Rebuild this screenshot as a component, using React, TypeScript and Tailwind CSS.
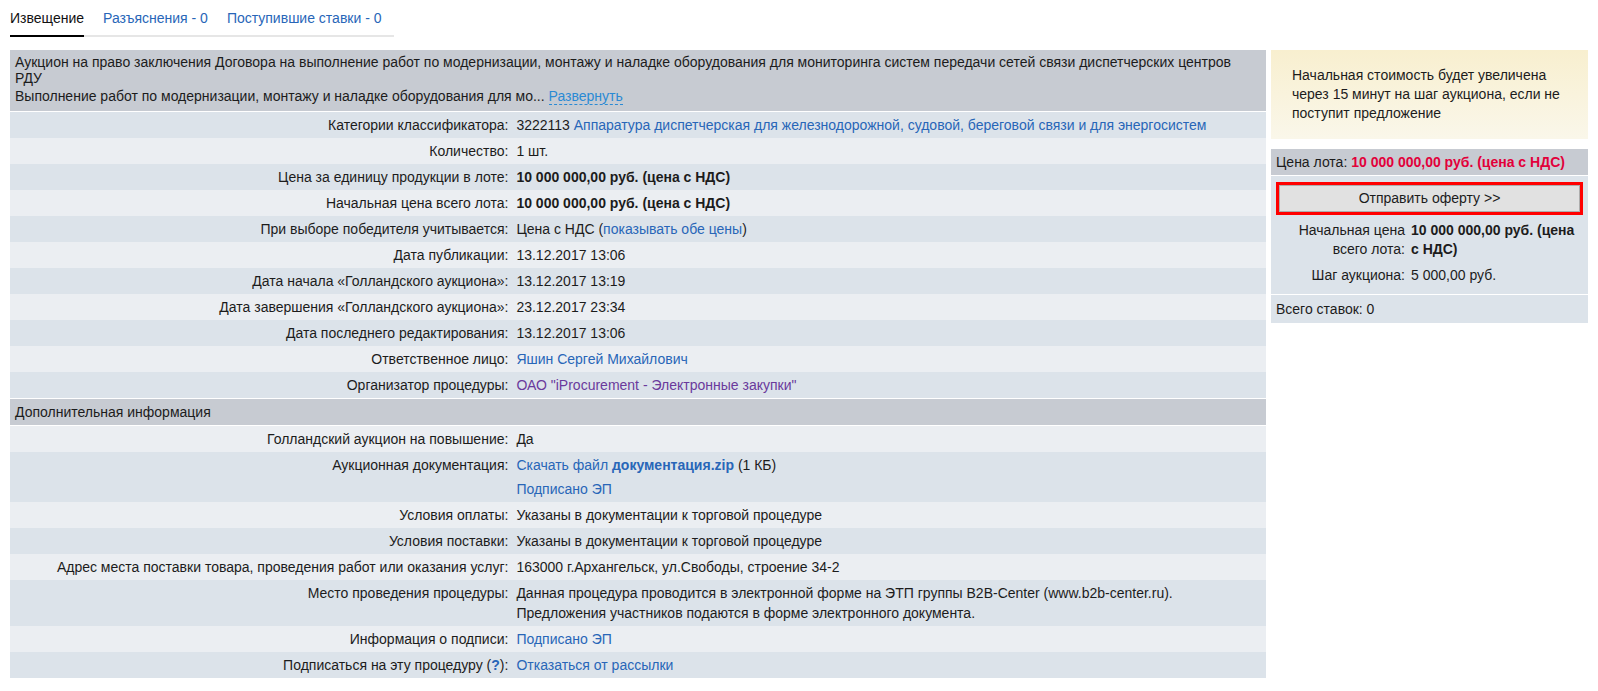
import type { ReactNode } from "react";

const LINK = "text-[#2866b8]";

type Row = { label: ReactNode; value: ReactNode };

const mainRows: Row[] = [
    {
        label: "Категории классификатора:",
        value: (
            <>
                3222113 <a className={LINK}>Аппаратура диспетчерская для железнодорожной, судовой, береговой связи и для энергосистем</a>
            </>
        ),
    },
    { label: "Количество:", value: "1 шт." },
    { label: "Цена за единицу продукции в лоте:", value: <b>10 000 000,00 руб. (цена с НДС)</b> },
    { label: "Начальная цена всего лота:", value: <b>10 000 000,00 руб. (цена с НДС)</b> },
    {
        label: "При выборе победителя учитывается:",
        value: (
            <>
                Цена с НДС (<a className={LINK}>показывать обе цены</a>)
            </>
        ),
    },
    { label: "Дата публикации:", value: "13.12.2017 13:06" },
    { label: "Дата начала «Голландского аукциона»:", value: "13.12.2017 13:19" },
    { label: "Дата завершения «Голландского аукциона»:", value: "23.12.2017 23:34" },
    { label: "Дата последнего редактирования:", value: "13.12.2017 13:06" },
    { label: "Ответственное лицо:", value: <a className={LINK}>Яшин Сергей Михайлович</a> },
    { label: "Организатор процедуры:", value: <a className="text-[#6a3a9c]">ОАО "iProcurement - Электронные закупки"</a> },
];

const extraRows: Row[] = [
    { label: "Голландский аукцион на повышение:", value: "Да" },
    {
        label: "Аукционная документация:",
        value: (
            <>
                <div>
                    <a className={LINK}>
                        Скачать файл <b>документация.zip</b>
                    </a>{" "}
                    (1 КБ)
                </div>
                <div className="mt-1">
                    <a className={LINK}>Подписано ЭП</a>
                </div>
            </>
        ),
    },
    { label: "Условия оплаты:", value: "Указаны в документации к торговой процедуре" },
    { label: "Условия поставки:", value: "Указаны в документации к торговой процедуре" },
    { label: "Адрес места поставки товара, проведения работ или оказания услуг:", value: "163000 г.Архангельск, ул.Свободы, строение 34-2" },
    {
        label: "Место проведения процедуры:",
        value: (
            <>
                Данная процедура проводится в электронной форме на ЭТП группы B2B-Center (www.b2b-center.ru).
                <br />
                Предложения участников подаются в форме электронного документа.
            </>
        ),
    },
    { label: "Информация о подписи:", value: <a className={LINK}>Подписано ЭП</a> },
    {
        label: (
            <>
                Подписаться на эту процедуру (<b className={LINK}>?</b>):
            </>
        ),
        value: <a className={LINK}>Отказаться от рассылки</a>,
    },
];

function InfoRow({ row, dark }: { row: Row; dark: boolean }) {
    return (
        <div className={`grid grid-cols-[40%_1fr] py-[3px] leading-[20px] ${dark ? "bg-[#dce3ea]" : "bg-[#ebeef2]"}`}>
            <div className="text-right pr-1">{row.label}</div>
            <div className="pl-1">{row.value}</div>
        </div>
    );
}

function Tabs() {
    return (
        <div className="inline-flex gap-[19px] border-b-2 border-[#e6e6e6] pt-2">
            <div className="pb-[6px] -mb-[2px] border-b-2 border-black text-[#111]">Извещение</div>
            <div className={`pb-[6px] ${LINK}`}>Разъяснения - 0</div>
            <div className={`pb-[6px] pr-3 ${LINK}`}>Поступившие ставки - 0</div>
        </div>
    );
}

export default function App() {
    return (
        <div className="min-h-screen bg-white px-[10px] text-[14px] text-[#1c1c1c] font-['Liberation_Sans',Arial,sans-serif]">
            <Tabs />
            <div className="flex gap-[5px] mt-[13px] items-start">
                <div className="flex-1 min-w-0">
                    <div className="bg-[#c7cbd2] px-[5px] pt-1 pb-[5px] border-b border-white">
                        <div className="leading-4">
                            Аукцион на право заключения Договора на выполнение работ по модернизации, монтажу и наладке оборудования для мониторинга систем передачи сетей связи диспетчерских центров
                            <br />
                            РДУ
                        </div>
                        <div className="leading-5">
                            Выполнение работ по модернизации, монтажу и наладке оборудования для мо...{" "}
                            <a className="text-[#2a8ad4] border-b border-dashed border-[#2a8ad4]">Развернуть</a>
                        </div>
                    </div>
                    {mainRows.map((r, i) => (
                        <InfoRow key={i} row={r} dark={i % 2 === 0} />
                    ))}
                    <div className="bg-[#c7cbd2] px-[5px] py-[3px] leading-[20px] border-y border-white">Дополнительная информация</div>
                    {extraRows.map((r, i) => (
                        <InfoRow key={i} row={r} dark={i % 2 === 1} />
                    ))}
                </div>

                <div className="w-[317px] shrink-0 flex flex-col gap-[10px]">
                    <div className="bg-gradient-to-b from-[#f8efcf] to-[#faf7ea] pl-[21px] pr-3 py-4 leading-[19px]">
                        Начальная стоимость будет увеличена через 15 минут на шаг аукциона, если не поступит предложение
                    </div>
                    <div className="bg-[#dce3ea]">
                        <div className="bg-[#c7cbd2] px-[5px] py-[3px] leading-[20px] border-b border-white">
                            Цена лота: <b className="text-[#e2003a]">10 000 000,00 руб. (цена с НДС)</b>
                        </div>
                        <div className="px-[5px] pt-[6px] pb-[9px] border-b border-white">
                            <div className="border-[3px] border-[#ff0000]">
                                <button className="w-full h-[27px] bg-[#e1e1e1] border border-[#adadad] text-[#1c1c1c] leading-[25px]">
                                    Отправить оферту &gt;&gt;
                                </button>
                            </div>
                            <div className="grid grid-cols-[129px_1fr] gap-x-[6px] gap-y-[7px] mt-[6px] leading-[19px]">
                                <div className="text-right">Начальная цена всего лота:</div>
                                <div className="font-bold">10 000 000,00 руб. (цена с НДС)</div>
                                <div className="text-right">Шаг аукциона:</div>
                                <div>5 000,00 руб.</div>
                            </div>
                        </div>
                        <div className="px-[5px] py-[4px] leading-[20px]">Всего ставок: 0</div>
                    </div>
                </div>
            </div>
        </div>
    );
}
